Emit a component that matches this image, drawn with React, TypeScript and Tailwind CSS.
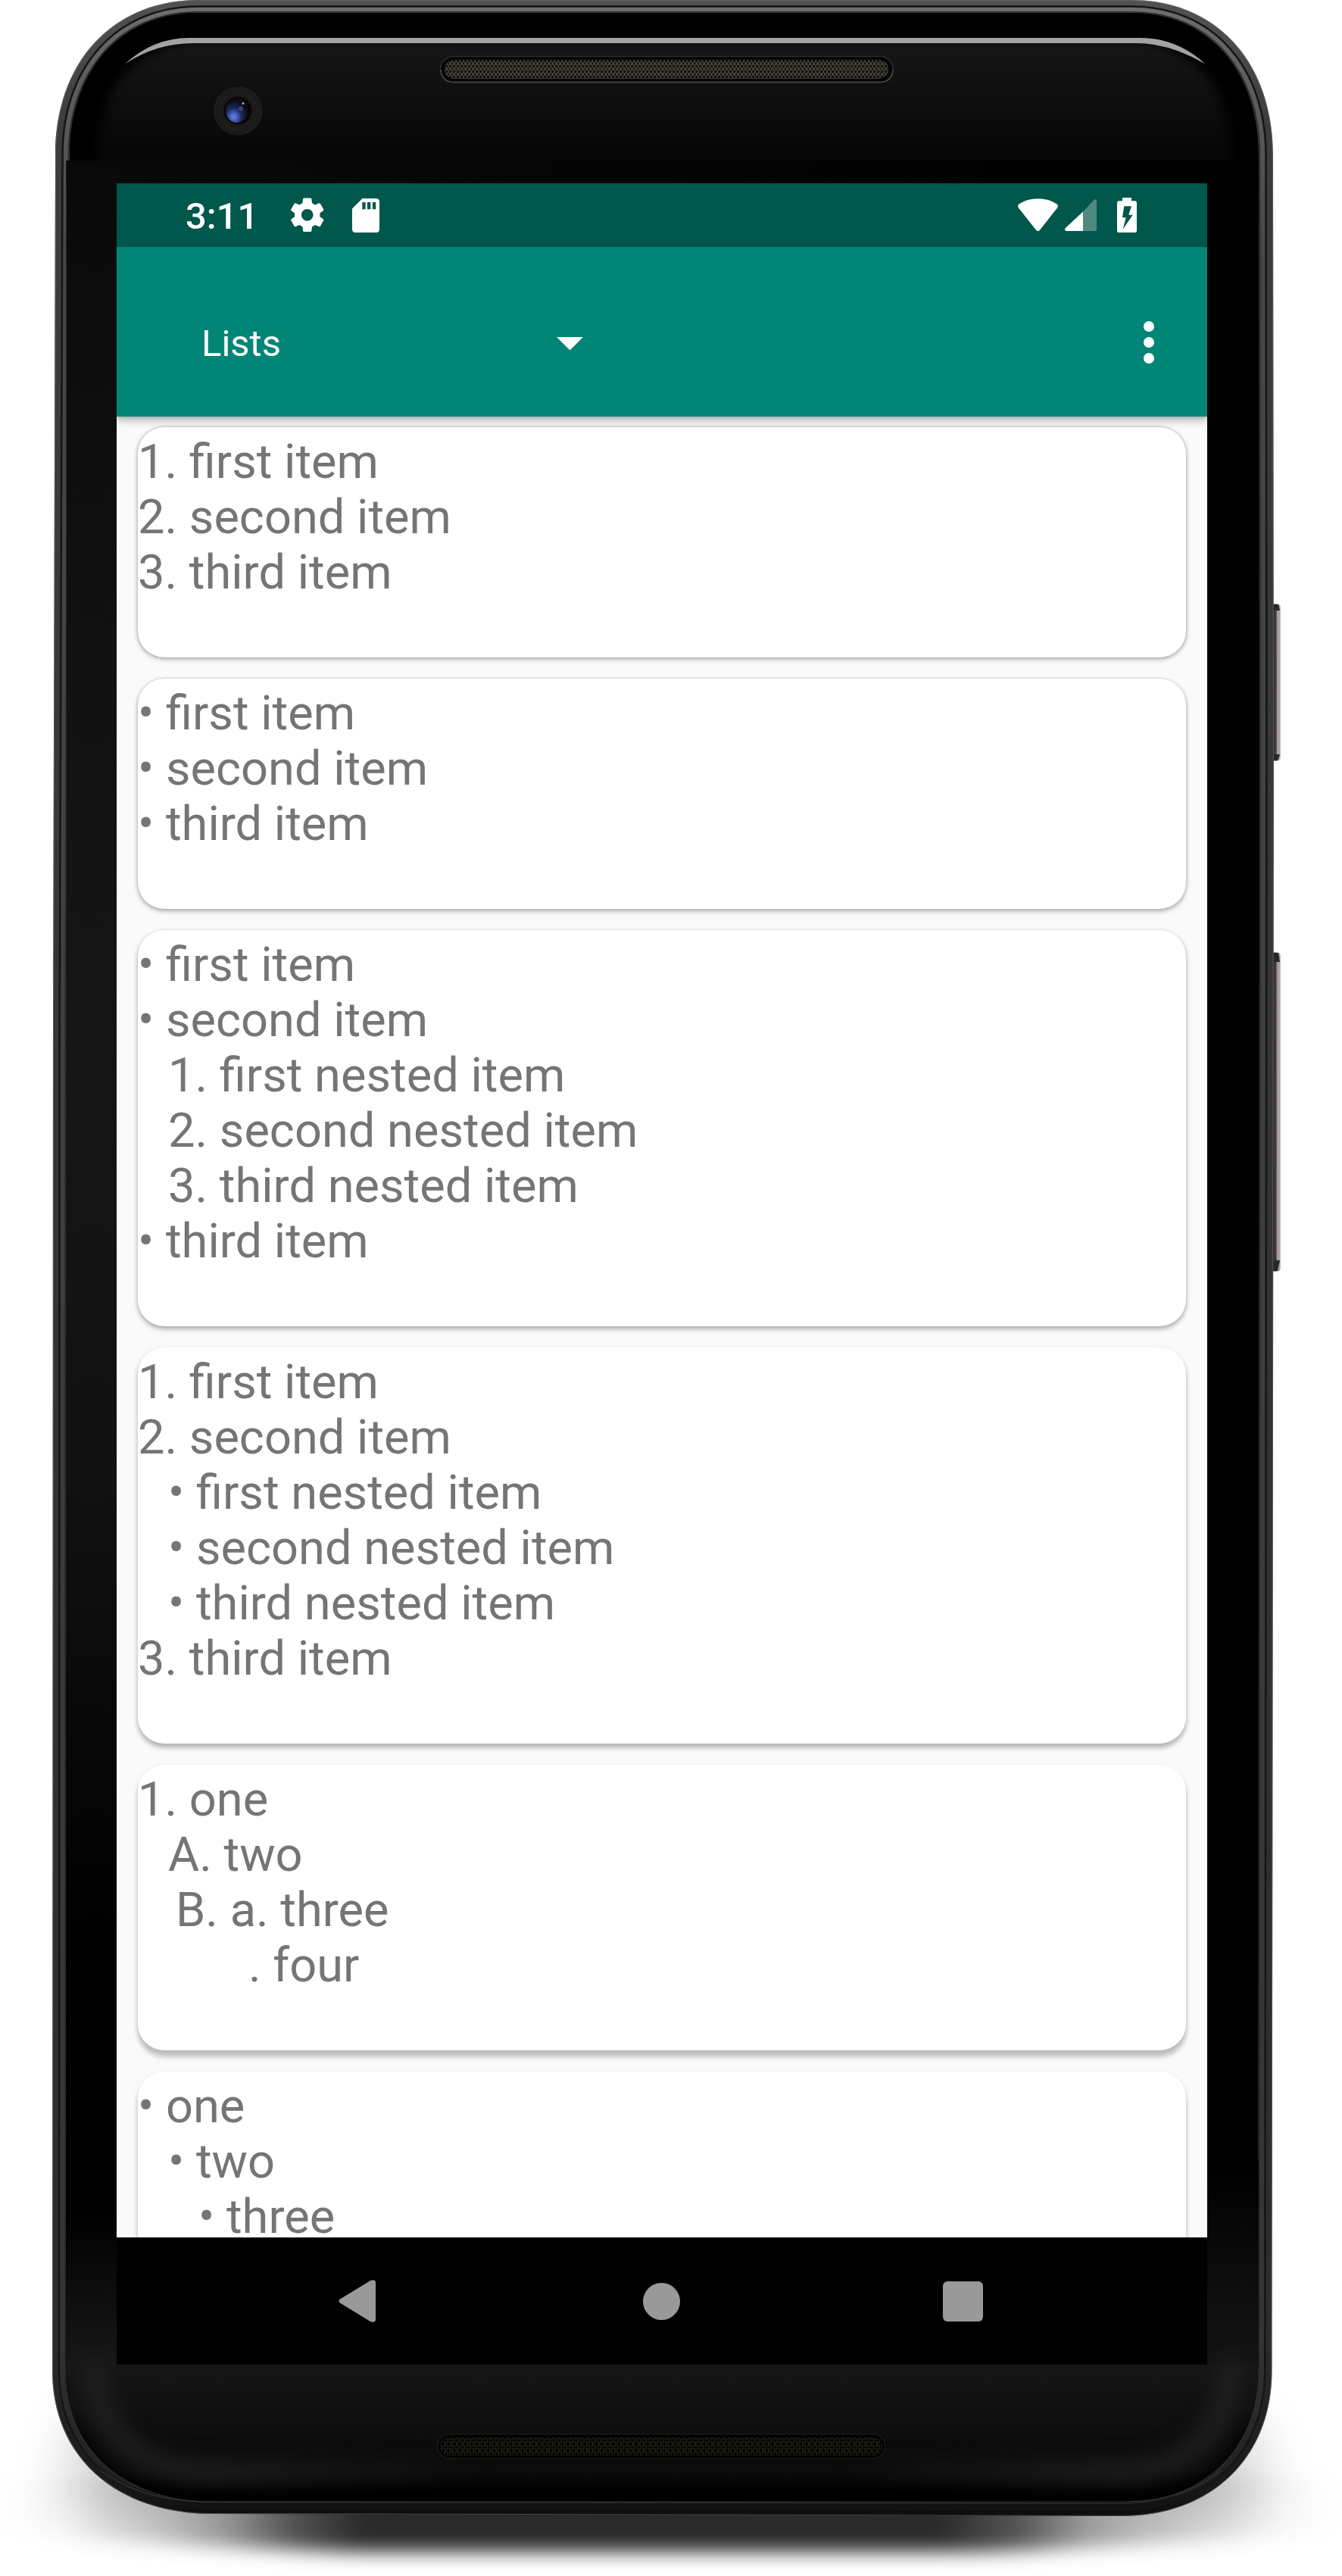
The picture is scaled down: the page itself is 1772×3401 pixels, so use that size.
import React from "react";

type Line = { text: string; indent?: string };
type Card = { lines: Line[]; height: string; shadow: string };

const N1 = "ml-[40px]";
const N2 = "ml-[80px]";

const cards: Card[] = [
  {
    height: "h-[304px]",
    shadow: "shadow-[0_2px_6px_rgba(0,0,0,0.3),0_0_4px_rgba(0,0,0,0.18)]",
    lines: [{ text: "1. first item" }, { text: "2. second item" }, { text: "3. third item" }],
  },
  {
    height: "h-[304px]",
    shadow: "shadow-[0_3px_6px_rgba(0,0,0,0.28),0_0_5px_rgba(0,0,0,0.15)]",
    lines: [{ text: "• first item" }, { text: "• second item" }, { text: "• third item" }],
  },
  {
    height: "h-[523px]",
    shadow: "shadow-[0_4px_6px_rgba(0,0,0,0.25),0_1px_6px_rgba(0,0,0,0.13)]",
    lines: [
      { text: "• first item" },
      { text: "• second item" },
      { text: "1. first nested item", indent: N1 },
      { text: "2. second nested item", indent: N1 },
      { text: "3. third nested item", indent: N1 },
      { text: "• third item" },
    ],
  },
  {
    height: "h-[523px]",
    shadow: "shadow-[0_6px_6px_rgba(0,0,0,0.22),0_2px_7px_rgba(0,0,0,0.12)]",
    lines: [
      { text: "1. first item" },
      { text: "2. second item" },
      { text: "• first nested item", indent: N1 },
      { text: "• second nested item", indent: N1 },
      { text: "• third nested item", indent: N1 },
      { text: "3. third item" },
    ],
  },
  {
    height: "h-[377px]",
    shadow: "shadow-[0_9px_6px_rgba(0,0,0,0.2),0_3px_8px_rgba(0,0,0,0.1)]",
    lines: [
      { text: "1. one" },
      { text: "A. two", indent: N1 },
      { text: "B. a. three", indent: "ml-[50px]" },
      { text: ". four", indent: "ml-[146px]" },
    ],
  },
  {
    height: "h-[377px]",
    shadow: "shadow-[0_9px_6px_rgba(0,0,0,0.2),0_3px_8px_rgba(0,0,0,0.1)]",
    lines: [{ text: "• one" }, { text: "• two", indent: N1 }, { text: "• three", indent: N2 }],
  },
];

/** Outline of the phone body; t = 0 is the outer edge, t = 1 the edge of the glass. */
function bodyPath(t: number): string {
  const mix = (a: number, b: number) => a + (b - a) * t;
  const top = mix(0, 17);
  const lt = mix(73, 92);
  const lm = mix(70, 87.5);
  const lb = mix(69, 87);
  const rt = mix(1681, 1662);
  const rb = mix(1679.5, 1661);
  const bl = mix(3319, 3302);
  const br = mix(3322, 3303.5);
  const k = 0.4;
  const tx1 = 262;
  const tx2 = 1494;
  const ty = 205;
  const by = 3130;
  const bx1 = 280;
  const bx2 = 1480;
  return [
    `M${lt} ${ty}`,
    `C${lt} ${top + (ty - top) * k} ${lt + (tx1 - lt) * k} ${top} ${tx1} ${top}`,
    `L${tx2} ${top}`,
    `C${rt - (rt - tx2) * k} ${top} ${rt} ${top + (ty - top) * k} ${rt} ${ty}`,
    `L${mix(1682, 1663)} 1000 L${rb} ${by}`,
    `C${rb} ${br - (br - by) * k} ${rb - (rb - bx2) * k} ${br} ${bx2} ${br}`,
    `L${bx1} ${bl}`,
    `C${lb + (bx1 - lb) * k} ${bl} ${lb} ${bl - (bl - by) * k} ${lb} ${by}`,
    `L${lm} 1340 Z`,
  ].join(" ");
}

function DeviceArt() {
  return (
    <svg className="absolute inset-0" width="1772" height="3401" viewBox="0 0 1772 3401">
      <defs>
        <linearGradient id="rimOuter" x1="0" y1="0" x2="0" y2="3322" gradientUnits="userSpaceOnUse">
          <stop offset="0" stopColor="#515352" />
          <stop offset="0.05" stopColor="#3c3c3c" />
          <stop offset="0.93" stopColor="#2c2c2c" />
          <stop offset="0.99" stopColor="#181818" />
          <stop offset="1" stopColor="#0c0c0c" />
        </linearGradient>
        <linearGradient id="rimInner" x1="0" y1="0" x2="0" y2="3322" gradientUnits="userSpaceOnUse">
          <stop offset="0" stopColor="#707070" />
          <stop offset="0.02" stopColor="#626262" />
          <stop offset="0.1" stopColor="#464646" />
          <stop offset="0.93" stopColor="#343434" />
          <stop offset="0.98" stopColor="#222" />
          <stop offset="1" stopColor="#0e0e0e" />
        </linearGradient>
        <linearGradient id="forehead" x1="0" y1="57" x2="0" y2="212" gradientUnits="userSpaceOnUse">
          <stop offset="0" stopColor="#161616" />
          <stop offset="1" stopColor="#050505" />
        </linearGradient>
        <linearGradient id="foreheadFoot" x1="88" y1="0" x2="1300" y2="0" gradientUnits="userSpaceOnUse">
          <stop offset="0" stopColor="#090909" />
          <stop offset="1" stopColor="#020202" />
        </linearGradient>
        <linearGradient id="leftBezel" x1="0" y1="212" x2="0" y2="3127" gradientUnits="userSpaceOnUse">
          <stop offset="0" stopColor="#090909" />
          <stop offset="0.25" stopColor="#121212" />
          <stop offset="0.42" stopColor="#161616" />
          <stop offset="0.6" stopColor="#111" />
          <stop offset="0.8" stopColor="#010101" />
          <stop offset="0.93" stopColor="#010101" />
          <stop offset="1" stopColor="#181818" />
        </linearGradient>
        <linearGradient id="rightBezel" x1="0" y1="2850" x2="0" y2="3127" gradientUnits="userSpaceOnUse">
          <stop offset="0" stopColor="#000" />
          <stop offset="1" stopColor="#151515" />
        </linearGradient>
        <linearGradient id="chin" x1="0" y1="3122" x2="0" y2="3303" gradientUnits="userSpaceOnUse">
          <stop offset="0" stopColor="#161616" />
          <stop offset="0.35" stopColor="#101010" />
          <stop offset="0.6" stopColor="#0b0b0b" />
          <stop offset="0.78" stopColor="#0b0b0b" />
          <stop offset="0.94" stopColor="#000" />
        </linearGradient>
        <linearGradient id="chinGlow" x1="88" y1="0" x2="1661" y2="0" gradientUnits="userSpaceOnUse">
          <stop offset="0" stopColor="#222" stopOpacity="0.75" />
          <stop offset="0.12" stopColor="#222" stopOpacity="0.7" />
          <stop offset="0.35" stopColor="#222" stopOpacity="0" />
          <stop offset="0.65" stopColor="#222" stopOpacity="0" />
          <stop offset="0.88" stopColor="#222" stopOpacity="0.7" />
          <stop offset="1" stopColor="#222" stopOpacity="0.75" />
        </linearGradient>
        <radialGradient id="lens" cx="0.36" cy="0.76" r="0.75">
          <stop offset="0" stopColor="#6b80d8" />
          <stop offset="0.2" stopColor="#4b62bd" />
          <stop offset="0.5" stopColor="#1c2657" />
          <stop offset="0.9" stopColor="#0b0b16" />
        </radialGradient>
        <linearGradient id="button" x1="1681" y1="0" x2="1691" y2="0" gradientUnits="userSpaceOnUse">
          <stop offset="0" stopColor="#2a282b" />
          <stop offset="0.4" stopColor="#454147" />
          <stop offset="0.55" stopColor="#9e9698" />
          <stop offset="0.9" stopColor="#b0a8a8" />
          <stop offset="1" stopColor="#5a5656" />
        </linearGradient>
        <linearGradient id="floorFade" x1="0" y1="0" x2="1772" y2="0" gradientUnits="userSpaceOnUse">
          <stop offset="0" stopColor="#262626" stopOpacity="0" />
          <stop offset="0.05" stopColor="#262626" stopOpacity="0.05" />
          <stop offset="0.11" stopColor="#262626" stopOpacity="0.22" />
          <stop offset="0.17" stopColor="#262626" stopOpacity="0.5" />
          <stop offset="0.22" stopColor="#262626" stopOpacity="0.8" />
          <stop offset="0.27" stopColor="#262626" stopOpacity="0.98" />
          <stop offset="0.7" stopColor="#262626" stopOpacity="0.98" />
          <stop offset="0.76" stopColor="#262626" stopOpacity="0.78" />
          <stop offset="0.81" stopColor="#262626" stopOpacity="0.46" />
          <stop offset="0.89" stopColor="#262626" stopOpacity="0.18" />
          <stop offset="0.95" stopColor="#262626" stopOpacity="0.05" />
          <stop offset="1" stopColor="#262626" stopOpacity="0" />
        </linearGradient>
        <pattern id="meshTop" width="5" height="7" patternUnits="userSpaceOnUse">
          <rect width="5" height="7" fill="#12110f" />
          <path d="M0.5 0.5 L2.6 3.5 L0.5 6.5 M4.6 0 L3.4 2 M4.6 7 L3.4 5" stroke="#767062" strokeWidth="1" fill="none" />
        </pattern>
        <pattern id="meshBottom" width="7.5" height="9" patternUnits="userSpaceOnUse">
          <rect width="7.5" height="9" fill="#060605" />
          <path d="M1 1 L4 4.5 L1 8 M6.5 0.5 L5 3 M6.5 8.5 L5 6" stroke="#35342f" strokeWidth="1" fill="none" />
        </pattern>
        <clipPath id="glassClip">
          <path d={bodyPath(1)} />
        </clipPath>
        <clipPath id="foreheadClip">
          <rect x="88" y="17" width="1580" height="195" />
        </clipPath>
        <filter id="blurSoft" x="-10%" y="-20%" width="120%" height="140%" colorInterpolationFilters="sRGB">
          <feGaussianBlur stdDeviation="7" />
        </filter>
        <filter id="blurMedium" x="-10%" y="-60%" width="120%" height="220%" colorInterpolationFilters="sRGB">
          <feGaussianBlur stdDeviation="12" />
        </filter>
        <filter id="blurWide" x="-80%" y="-120%" width="260%" height="340%" colorInterpolationFilters="sRGB">
          <feGaussianBlur stdDeviation="36" />
        </filter>
      </defs>

      {/* shadow on the floor */}
      <ellipse cx="175" cy="3250" rx="90" ry="70" fill="#000" opacity="0.17" filter="url(#blurWide)" />
      <ellipse cx="1580" cy="3250" rx="90" ry="70" fill="#000" opacity="0.17" filter="url(#blurWide)" />
      <path d="M0 3270 H1772 V3340 Q1500 3362 1300 3369 H460 Q220 3362 0 3340 Z" fill="url(#floorFade)" filter="url(#blurMedium)" />

      {/* side keys */}
      <rect x="1678" y="797.5" width="12.5" height="207" rx="4" fill="url(#button)" />
      <rect x="1678" y="1257.5" width="12.5" height="421" rx="4" fill="url(#button)" />
      <path d="M1680 798 H1688 L1690 806 H1680 Z M1680 996 H1690 L1687 1004 H1680 Z" fill="#29272a" />
      <path d="M1680 1258 H1688 L1690 1270 H1680 Z M1680 1664 H1690 L1687 1678 H1680 Z" fill="#29272a" />

      {/* rim */}
      <path d={bodyPath(0)} fill="url(#rimOuter)" />
      <path d={bodyPath(0.03)} fill="none" stroke="#6d6f6e" strokeWidth="1" opacity="0.6" />
      <path d={bodyPath(0.73)} fill="none" stroke="url(#rimInner)" strokeWidth="7" />
      <path d={bodyPath(0.5)} fill="none" stroke="#151515" strokeWidth="2.5" />
      <path d={bodyPath(0.92)} fill="none" stroke="#2b2b2b" strokeWidth="1.5" />

      {/* glass */}
      <path d={bodyPath(1)} fill="#000" />
      <g clipPath="url(#foreheadClip)">
        <path
          d="M127 260 C129 160 142 112 172 90 Q210 56 256 54 H1500 Q1546 56 1584 90 C1614 114 1626 160 1627 260 Z"
          fill="url(#forehead)"
          filter="url(#blurSoft)"
        />
      </g>
      <path d="M165 84.5 Q202 50 250 50 V17 H1506 V50 Q1554 50 1591.5 84.5 L1640 90 L1560 17 H200 L110 90 Z" fill="#000" clipPath="url(#glassClip)" />
      <rect x="245" y="17.500" width="1265" height="33" fill="#000" />
      <path
        d="M165 84.5 Q202 50 250 50 H1506 Q1554 50 1591.5 84.5 Q1545 57 1500 57 H256 Q206 57 165 84.5 Z"
        fill="#a3a3a3"
      />
      <rect x="87.5" y="212" width="1212" height="32" fill="url(#foreheadFoot)" />
      <rect x="87.5" y="212" width="68" height="2915" fill="url(#leftBezel)" />
      <rect x="1592" y="2850" width="70" height="277" fill="url(#rightBezel)" />
      <g clipPath="url(#glassClip)">
        <rect x="80" y="3122" width="1590" height="185" fill="url(#chin)" />
        <path
          d="M122 3122 C128 3205 170 3262 280 3264 H1470 C1580 3262 1620 3205 1626 3122"
          stroke="url(#chinGlow)"
          strokeWidth="34"
          fill="none"
          filter="url(#blurMedium)"
        />
        <path d="M100 3200 Q140 3302 290 3302 H1470 Q1610 3302 1650 3200" fill="none" stroke="#000" strokeWidth="14" opacity="0.6" filter="url(#blurSoft)" />
      </g>
      <path d="M132 3261 Q185 3303 280 3303 H1480 Q1568 3303 1612 3261" fill="none" stroke="#333" strokeWidth="1.2" />

      {/* front camera */}
      <circle cx="314.3" cy="146.5" r="32" fill="#1b191a" />
      <circle cx="314.3" cy="146.5" r="31" fill="none" stroke="#242122" strokeWidth="2" strokeDasharray="2 2" />
      <circle cx="314.3" cy="146.5" r="25" fill="none" stroke="#232122" strokeWidth="3" strokeDasharray="2 3" />
      <circle cx="314" cy="146" r="18.5" fill="#070708" />
      <ellipse cx="312.5" cy="146" rx="14.5" ry="16" fill="url(#lens)" />
      <circle cx="318" cy="143.5" r="3" fill="#4f4288" opacity="0.8" />
      <circle cx="321" cy="136.5" r="1.5" fill="#c89ab8" />

      {/* earpiece */}
      <rect x="581.5" y="74.5" width="597.5" height="34" rx="17" fill="#050505" stroke="#2c2c2c" strokeWidth="1.5" />
      <path d="M582 92 Q583 108 599 108.5 H1162 Q1178 108 1179 92" fill="none" stroke="#4c4b48" strokeWidth="1.5" />
      <rect x="587" y="79" width="586" height="25" rx="12.5" fill="url(#meshTop)" />

      {/* bottom speaker */}
      <rect x="577.5" y="3214" width="591" height="31.5" rx="15.75" fill="#020202" stroke="#1e1e1e" strokeWidth="1.2" />
      <rect x="581" y="3218" width="584" height="24" rx="12" fill="url(#meshBottom)" />
    </svg>
  );
}

function GearIcon() {
  return (
    <svg className="shrink-0" width="53.5" height="53.5" viewBox="0 0 24 24" fill="#fff">
      <path d="M19.43 12.98c.04-.32.07-.64.07-.98s-.03-.66-.07-.98l2.11-1.65c.19-.15.24-.42.12-.64l-2-3.46c-.12-.22-.39-.3-.61-.22l-2.49 1c-.52-.4-1.08-.73-1.69-.98l-.38-2.65C14.46 2.18 14.25 2 14 2h-4c-.25 0-.46.18-.49.42l-.38 2.65c-.61.25-1.17.59-1.69.98l-2.49-1c-.23-.09-.49 0-.61.22l-2 3.46c-.13.22-.07.49.12.64l2.11 1.65c-.04.32-.07.65-.07.98s.03.66.07.98l-2.11 1.65c-.19.15-.24.42-.12.64l2 3.46c.12.22.39.3.61.22l2.49-1c.52.4 1.08.73 1.69.98l.38 2.65c.03.24.24.42.49.42h4c.25 0 .46-.18.49-.42l.38-2.65c.61-.25 1.17-.59 1.69-.98l2.49 1c.23.09.49 0 .61-.22l2-3.46c.12-.22.07-.49-.12-.64l-2.11-1.65zM12 15.5c-1.93 0-3.5-1.57-3.5-3.5s1.57-3.5 3.5-3.5 3.5 1.57 3.5 3.5-1.57 3.5-3.5 3.5z" />
    </svg>
  );
}

function SdCardIcon() {
  return (
    <svg className="shrink-0" width="36" height="45" viewBox="0 0 36 45">
      <path
        fill="#fff"
        fillRule="evenodd"
        d="M13.5 0H31.5Q36 0 36 4.5V40.500Q36 45 31.500 45H4.500Q0 45 0 40.500V13.500ZM13.300 5V14.200H17.600V5ZM20 5V14.200H24.300V5ZM26.900 5V14.200H31.200V5Z"
      />
    </svg>
  );
}

function StatusBar() {
  return (
    <div className="flex h-[84px] shrink-0 items-center bg-[#00574b] pl-[91px] pr-[93px] text-white">
      <span className="relative top-[2px] w-[90px] text-[49px] leading-[84px] font-medium whitespace-nowrap">3:11</span>
      <div className="ml-[44px] flex items-center gap-[32px]">
        <GearIcon />
        <SdCardIcon />
      </div>
      <div className="ml-auto flex items-center">
        <svg width="53" height="44" viewBox="0 0 53 44" fill="#fff">
          <path d="M1.300 7.600Q12 0.300 26.500 0.300T51.700 7.600Q53.800 9.600 52.200 12.300L29 41.700Q26.500 44.500 24 41.700L0.800 12.300Q-0.800 9.600 1.300 7.600Z" />
        </svg>
        <svg className="ml-[9px]" width="42" height="44" viewBox="0 0 42 44">
          <path d="M24 17.500L38.500 1.800Q42 0 42 3.500V40.500Q42 43 39.500 43H24Z" fill="#4d897f" />
          <path d="M24 17.500V43H2Q-1 42 0.600 39.300Z" fill="#fff" />
        </svg>
        <svg className="ml-[27px]" width="26" height="46" viewBox="0 0 26 46">
          <path
            fill="#fff"
            fillRule="evenodd"
            d="M7 0H19V4.300H23.500Q26 4.300 26 6.800V43.500Q26 46 23.500 46H2.500Q0 46 0 43.500V6.800Q0 4.300 2.500 4.300H7ZM9.300 11.300L7 26.300H11.700L7.700 41.700L20.700 22.700H15.300L19 11.300Z"
          />
        </svg>
      </div>
    </div>
  );
}

function AppBar() {
  return (
    <div className="relative z-10 flex h-[224px] shrink-0 items-center bg-[#008577] pl-[112px] pr-[70px] text-white shadow-[0_6px_10px_rgba(0,0,0,0.22),0_2px_5px_rgba(0,0,0,0.14)]">
      <span className="relative top-[16px] w-[469px] text-[49px] leading-[60px]">Lists</span>
      <svg className="relative top-[15.500px]" width="35" height="18" viewBox="0 0 35 18">
        <path d="M0 0H35L17.500 17.500Z" fill="#fff" />
      </svg>
      <div className="relative top-[14px] ml-auto flex flex-col gap-[7px]">
        <span className="size-[14px] rounded-full bg-white" />
        <span className="size-[14px] rounded-full bg-white" />
        <span className="size-[14px] rounded-full bg-white" />
      </div>
    </div>
  );
}

function NavBar() {
  return (
    <div className="flex h-[168px] shrink-0 items-center bg-black pl-[293px] pr-[296px]">
      <svg width="49" height="56" viewBox="0 0 49 56">
        <path d="M2 25.500L42.500 0.800Q49 -1.200 49 4V52Q49 57.200 42.500 55.200L2 30.500Q-1.200 28 2 25.500Z" fill="#999" />
      </svg>
      <div className="ml-[353px] size-[49px] rounded-full bg-[#999]" />
      <div className="ml-auto size-[53px] rounded-[6px] bg-[#999]" />
    </div>
  );
}

export default function App() {
  return (
    <div className="relative flex h-[3401px] w-[1772px] overflow-hidden bg-white font-['Roboto',sans-serif]">
      <DeviceArt />
      <main className="relative mt-[242px] ml-[154px] flex h-[2880px] w-[1440px] flex-col overflow-hidden bg-[#fafafa]">
        <StatusBar />
        <AppBar />
        <div className="flex min-h-0 flex-1 flex-col gap-[28px] overflow-hidden px-[28px] pt-[14px]">
          {cards.map((card, i) => (
            <section key={i} className={`shrink-0 rounded-[35px] bg-white pt-[9px] ${card.height} ${card.shadow}`}>
              {card.lines.map((line, j) => (
                <p
                  key={j}
                  className={`h-[73px] text-[63.15px] leading-[73px] whitespace-pre text-[#757575] ${line.indent ?? ""}`}
                >
                  {line.text}
                </p>
              ))}
            </section>
          ))}
        </div>
        <NavBar />
      </main>
    </div>
  );
}
